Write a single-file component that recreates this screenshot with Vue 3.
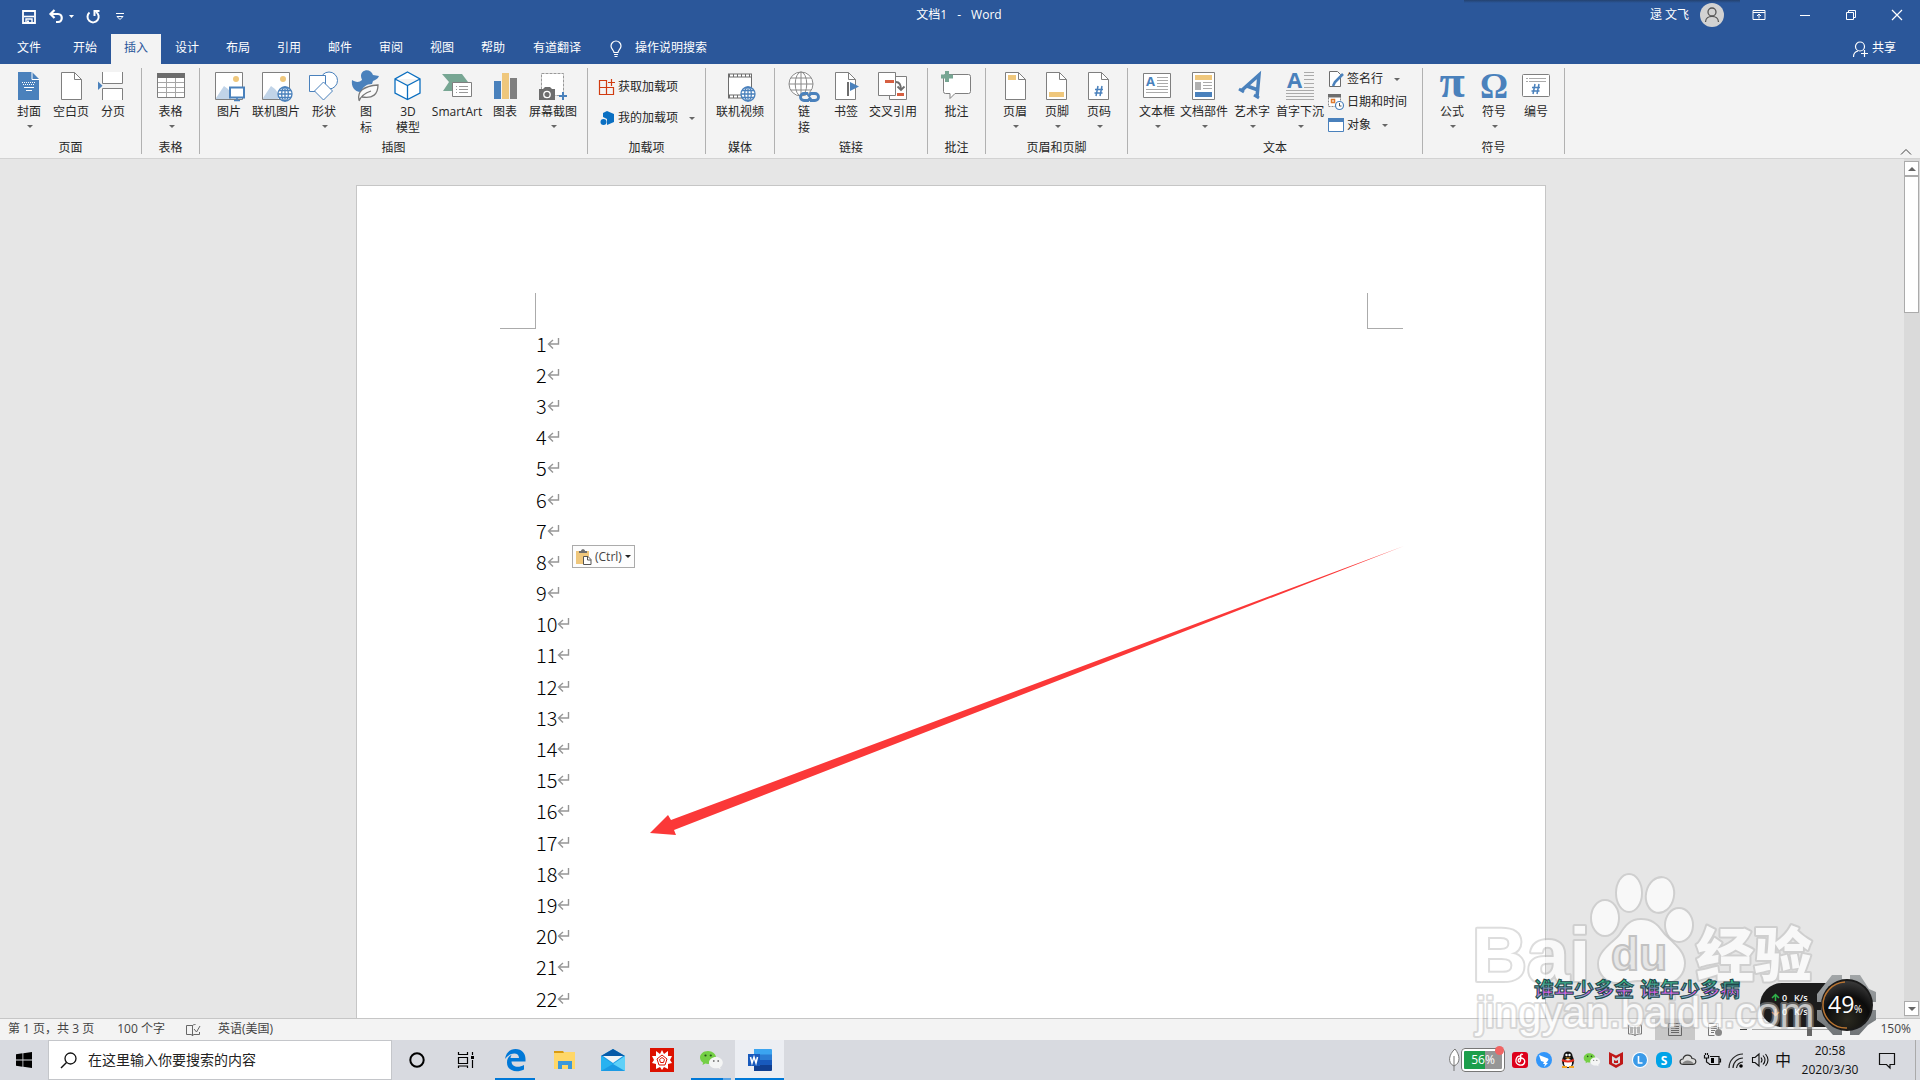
<template>
  <div class="word-app">
    <!-- 标题栏 -->
    <header class="title-bar">
      <div class="quick-access">
        <button v-for="q in quickActions" :key="q.icon" type="button" :class="['quick-btn', q.icon]" :aria-label="q.label">
          <svg :width="q.w" height="16" :viewBox="`0 0 ${q.w} 16`" v-html="icons[q.icon]"></svg>
        </button>
      </div>
      <h1 class="doc-title"><span>文档1</span><span>-</span><span>Word</span></h1>
      <div class="window-area">
        <span class="user-name">逯 文飞</span>
        <span class="avatar">
          <svg width="24" height="24" viewBox="0 0 24 24" v-html="icons.avatar"></svg>
        </span>
        <button v-for="w in windowActions" :key="w.icon" type="button" class="win-btn" :aria-label="w.label">
          <svg width="16" height="16" viewBox="0 0 16 16" v-html="icons[w.icon]"></svg>
        </button>
      </div>
      <div class="top-shadow"></div>
    </header>

    <!-- 选项卡 -->
    <nav class="tab-bar">
      <button
        v-for="t in tabs"
        :key="t"
        type="button"
        class="tab"
        :class="{ active: activeTab === t, file: t === '文件' }"
        @click="activeTab = t"
      >{{ t }}</button>
      <button type="button" class="tell-me">
        <svg width="12" height="18" viewBox="0 0 12 18" v-html="icons.bulb"></svg>
        <span>操作说明搜索</span>
      </button>
      <button type="button" class="share-btn">
        <svg width="16" height="16" viewBox="0 0 16 16" v-html="icons.share"></svg>
        <span>共享</span>
      </button>
    </nav>

    <!-- 功能区 -->
    <section class="ribbon">
      <div v-for="g in groups" :key="g.name" class="group" :class="g.size">
        <div class="group-body">
          <button v-for="b in g.items" :key="b.label" type="button" class="big-btn" :class="b.size">
            <svg width="32" height="32" viewBox="0 0 32 32" v-html="icons[b.icon]"></svg>
            <span class="big-label">{{ b.label }}</span>
            <i v-if="b.drop" class="caret"></i>
          </button>
          <div v-if="g.rows" class="small-list" :class="{ roomy: g.rows.length === 2 }">
            <button v-for="r in g.rows" :key="r.label" type="button" class="small-btn">
              <svg width="16" height="16" viewBox="0 0 16 16" v-html="icons[r.icon]"></svg>
              <span>{{ r.label }}</span>
              <i v-if="r.drop" class="caret"></i>
            </button>
          </div>
        </div>
        <div class="group-name">{{ g.name }}</div>
      </div>
      <button type="button" class="collapse-btn" aria-label="折叠功能区">
        <svg width="12" height="8" viewBox="0 0 12 8"><path d="M1 6.500l5-5 5 5" fill="none" stroke="#444" /></svg>
      </button>
    </section>

    <!-- 文档区 -->
    <main class="workspace">
      <div class="canvas">
        <article class="page">
          <div class="margin-marks">
            <span class="mark left"></span>
            <span class="mark right"></span>
          </div>
          <ol class="lines">
            <li v-for="n in 22" :key="n">
              <span>{{ n }}</span>
              <svg width="13" height="12" viewBox="0 0 13 12"><path d="M11.500 0v6H2M6 2L1.500 6 6 10.500" fill="none" stroke="#969696" stroke-width="1.400" /></svg>
            </li>
          </ol>
          <button type="button" class="paste-btn">
            <svg width="16" height="16" viewBox="0 0 16 16" v-html="icons.paste"></svg>
            <span>(Ctrl)</span>
            <i class="caret dark"></i>
          </button>
          <svg class="red-arrow" width="760" height="292" viewBox="648 545 760 292">
            <path d="M650 833L668 815 671 820 1404 546 674 830 676 835z" fill="#fb3838" />
          </svg>
        </article>
      </div>
      <div class="scrollbar">
        <button type="button" class="scroll-btn" aria-label="向上滚动"><i class="caret up"></i></button>
        <div class="thumb"></div>
        <button type="button" class="scroll-btn end" aria-label="向下滚动"><i class="caret down"></i></button>
      </div>
    </main>

    <!-- 状态栏 -->
    <footer class="status-bar">
      <span class="st-page">第 1 页，共 3 页</span>
      <span class="st-count">100 个字</span>
      <svg class="st-book" width="16" height="14" viewBox="0 0 16 14" v-html="icons.proof"></svg>
      <span class="st-lang">英语(美国)</span>
      <div class="views">
        <button v-for="v in viewModes" :key="v.icon" type="button" class="view-btn" :class="{ active: v.icon === 'viewPrint' }" :aria-label="v.label">
          <svg width="16" height="14" viewBox="0 0 16 14" v-html="icons[v.icon]"></svg>
        </button>
      </div>
      <span class="minus"></span>
      <input v-model="zoom" class="zoom-range" type="range" min="0" max="340" aria-label="缩放" />
      <span class="zoom-text">150%</span>
    </footer>

    <!-- 任务栏 -->
    <div class="taskbar">
      <button type="button" class="start-btn" aria-label="开始">
        <svg width="16" height="16" viewBox="0 0 16 16"><path d="M0 2.300l6.500-1v6.300H0zM7.300 1.200L16 0v7.600H7.300zM0 8.400h6.500v6.300L0 13.800zM7.300 8.400H16V16l-8.700-1.200z" /></svg>
      </button>
      <label class="search-box">
        <svg width="17" height="17" viewBox="0 0 17 17"><circle cx="10.500" cy="6.500" r="5.500" fill="none" stroke="#111" stroke-width="1.300" /><path d="M6.500 10.500L1 16" stroke="#111" stroke-width="1.400" /></svg>
        <input v-model="keyword" type="text" placeholder="在这里输入你要搜索的内容" />
      </label>
      <button v-for="a in apps" :key="a.icon" type="button" class="app-btn" :class="a.state" :aria-label="a.label">
        <svg width="24" height="24" viewBox="0 0 24 24" v-html="icons[a.icon]"></svg>
      </button>
      <div class="tray">
        <svg class="leaf" width="12" height="24" viewBox="0 0 12 24" v-html="icons.leaf"></svg>
        <div class="battery"><span>56%</span></div>
        <button v-for="t in trayIcons" :key="t" type="button" class="tray-btn" :aria-label="t">
          <svg width="18" height="18" viewBox="0 0 18 18" v-html="icons[t]"></svg>
        </button>
        <span class="ime">中</span>
        <div class="clock"><span>20:58</span><span>2020/3/30</span></div>
        <button type="button" class="notice-btn" aria-label="通知">
          <svg width="18" height="18" viewBox="0 0 18 18"><path d="M1.500 2.500h15v11h-4.500v3.500l-3.500-3.500h-7z" fill="none" stroke="#111" stroke-width="1.200" /></svg>
        </button>
      </div>
    </div>

    <!-- 悬浮层：网速球、歌词、水印 -->
    <svg class="floating" width="460" height="220" viewBox="1460 860 460 220">
      <defs>
        <linearGradient id="lyric" x1="0" y1="0" x2="0" y2="1">
          <stop offset="0.2" stop-color="#2fc884" />
          <stop offset="0.45" stop-color="#5b9ba0" />
          <stop offset="0.62" stop-color="#ee5af5" />
          <stop offset="0.85" stop-color="#58c7b0" />
        </linearGradient>
        <linearGradient id="metal" x1="0" y1="0" x2="0" y2="1">
          <stop offset="0" stop-color="#a2a6a8" />
          <stop offset="1" stop-color="#707477" />
        </linearGradient>
        <radialGradient id="ball" cx="0.5" cy="0.8" r="0.8">
          <stop offset="0" stop-color="#2b2a20" />
          <stop offset="0.6" stop-color="#0b0b0b" />
          <stop offset="1" stop-color="#3a3a3a" />
        </radialGradient>
      </defs>
      <rect x="1760" y="983" width="96" height="44" rx="22" fill="#1c1c1c" />
      <g class="speed-text">
        <path d="M1775.500 1001v-6M1772 998l3.500-3.500 3.500 3.500" fill="none" stroke="#2fb34a" stroke-width="1.500" />
        <text x="1782" y="1001">0</text>
        <text x="1794" y="1001">K/s</text>
        <path d="M1775.500 1009v6M1772 1012l3.500 3.500 3.500-3.500" fill="none" stroke="#d9762b" stroke-width="1.500" />
        <text x="1782" y="1015">0</text>
        <text x="1794" y="1015">K/s</text>
      </g>
      <g class="mark-shape">
        <text x="1472" y="981" class="mark-big">Bai</text>
        <ellipse cx="1605" cy="918" rx="13" ry="17" />
        <ellipse cx="1629" cy="893" rx="12" ry="18" />
        <ellipse cx="1660" cy="895" rx="13" ry="17" transform="rotate(12 1660 895)" />
        <ellipse cx="1679" cy="925" rx="13" ry="16" />
        <path d="M1641 920c-10 0-15 6-20 14s-22 16-22 30c0 10 8 18 18 18 8 0 14-2 24-2s16 2 25 2c11 0 18-9 18-19 0-14-16-22-23-32-5-7-10-11-20-11z" />
        <text x="1696" y="976" class="mark-cn">经验</text>
        <text x="1476" y="1027" class="mark-url">jingyan.baidu.com</text>
      </g>
      <text x="1611" y="970" class="mark-du">du</text>
      <text x="1534" y="997" class="lyric" fill="url(#lyric)">谁年少多金</text>
      <text x="1640" y="997" class="lyric" fill="url(#lyric)">谁年少多病</text>
      <path d="M1832 975h10v4h8v-4h10l9 14 7 3v10h-5v8h5v10l-8 5-9 10h-9v-5h-8v5h-9l-9-10-7-5v-10h4v-8h-4v-8z" fill="url(#metal)" />
      <circle cx="1847" cy="1005" r="26" fill="#1a1a1a" />
      <circle cx="1847" cy="1005" r="24" fill="url(#ball)" />
      <path d="M1845 982a23 23 0 0 0 2 46" fill="none" stroke="#b87432" stroke-width="1.500" />
      <text x="1828" y="1013" class="ball-num">49</text>
      <text x="1854" y="1013" class="ball-pct">%</text>
    </svg>
  </div>
</template>

<script setup>
import { ref } from 'vue';

const activeTab = ref('插入');
const keyword = ref('');
const zoom = ref(190);

const tabs = ['文件', '开始', '插入', '设计', '布局', '引用', '邮件', '审阅', '视图', '帮助', '有道翻译'];

const quickActions = [
  { icon: 'save', label: '保存', w: 16 },
  { icon: 'undo', label: '撤消', w: 26 },
  { icon: 'redo', label: '重复', w: 16 },
  { icon: 'more', label: '自定义快速访问工具栏', w: 16 }
];

const windowActions = [
  { icon: 'ribbonMode', label: '功能区显示选项' },
  { icon: 'minimize', label: '最小化' },
  { icon: 'restore', label: '还原' },
  { icon: 'close', label: '关闭' }
];

const groups = [
  {
    name: '页面', size: 'g142',
    items: [
      { icon: 'cover', label: '封面', drop: true },
      { icon: 'blank', label: '空白页' },
      { icon: 'pageBreak', label: '分页' }
    ]
  },
  { name: '表格', size: 'g58', items: [{ icon: 'table', label: '表格', drop: true }] },
  {
    name: '插图', size: 'g388',
    items: [
      { icon: 'picture', label: '图片' },
      { icon: 'onlinePic', label: '联机图片', size: 'wide' },
      { icon: 'shapes', label: '形状', drop: true, size: 'mid' },
      { icon: 'duck', label: '图 标', size: 'thin' },
      { icon: 'cube', label: '3D 模型', size: 'thin3d' },
      { icon: 'smartArt', label: 'SmartArt', size: 'wider' },
      { icon: 'chart', label: '图表' },
      { icon: 'screenshot', label: '屏幕截图', drop: true, size: 'wider' }
    ]
  },
  {
    name: '加载项', size: 'g118',
    rows: [
      { icon: 'getAddin', label: '获取加载项' },
      { icon: 'myAddin', label: '我的加载项', drop: true }
    ]
  },
  { name: '媒体', size: 'g69', items: [{ icon: 'video', label: '联机视频', size: 'wide' }] },
  {
    name: '链接', size: 'g153',
    items: [
      { icon: 'link', label: '链 接', size: 'narrow' },
      { icon: 'bookmark', label: '书签' },
      { icon: 'crossRef', label: '交叉引用', size: 'wide' }
    ]
  },
  { name: '批注', size: 'g58', items: [{ icon: 'comment', label: '批注' }] },
  {
    name: '页眉和页脚', size: 'g142',
    items: [
      { icon: 'pageHeader', label: '页眉', drop: true },
      { icon: 'pageFooter', label: '页脚', drop: true },
      { icon: 'pageNumber', label: '页码', drop: true }
    ]
  },
  {
    name: '文本', size: 'g295',
    items: [
      { icon: 'textBox', label: '文本框', drop: true },
      { icon: 'parts', label: '文档部件', drop: true, size: 'wide' },
      { icon: 'wordArt', label: '艺术字', drop: true, size: 'mid' },
      { icon: 'dropCap', label: '首字下沉', drop: true, size: 'wide' }
    ],
    rows: [
      { icon: 'sign', label: '签名行', drop: true },
      { icon: 'date', label: '日期和时间' },
      { icon: 'object', label: '对象', drop: true }
    ]
  },
  {
    name: '符号', size: 'g142',
    items: [
      { icon: 'pi', label: '公式', drop: true },
      { icon: 'omega', label: '符号', drop: true },
      { icon: 'number', label: '编号' }
    ]
  }
];

const viewModes = [
  { icon: 'viewRead', label: '阅读视图' },
  { icon: 'viewPrint', label: '页面视图' },
  { icon: 'viewWeb', label: 'Web 版式视图' }
];

const apps = [
  { icon: 'cortana', label: 'Cortana' },
  { icon: 'taskView', label: '任务视图' },
  { icon: 'edge', label: 'Edge', state: 'running' },
  { icon: 'explorer', label: '文件资源管理器' },
  { icon: 'mail', label: '邮件' },
  { icon: 'wolfram', label: 'Mathematica' },
  { icon: 'wechat', label: '微信', state: 'running multi' },
  { icon: 'word', label: 'Word', state: 'current' }
];

const trayIcons = ['music', 'bird', 'qq', 'wechatSmall', 'mcafee', 'clockL', 'skype', 'cloud', 'plug', 'wifi', 'volume'];

// 地球图标，多个按钮共用
const globe = (x, y, r, color, width = 1.3) => `
  <g fill="none" stroke="${color}" stroke-width="${width}">
    <circle cx="${x}" cy="${y}" r="${r}" fill="#fff"/>
    <ellipse cx="${x}" cy="${y}" rx="${r * 0.48}" ry="${r}"/>
    <path d="M${x} ${y - r}v${r * 2}M${x - r} ${y}h${r * 2}M${x - r * 0.86} ${y - r * 0.5}h${r * 1.72}M${x - r * 0.86} ${y + r * 0.5}h${r * 1.72}"/>
  </g>`;

// 折角纸张
const sheet = (x) => `<path d="M${x}.500 1.500h13l7 7v20h-20z" fill="#fff" stroke="#7f7f7f"/><path d="M${x + 13}.500 1.500v7h7" fill="none" stroke="#7f7f7f"/>`;

const photo = `<path d="M2.500 1.500h27v27h-27z" fill="#fff" stroke="#7f7f7f"/><path d="M3 27l8-12 4 3 3 4v6H3z" fill="#c1d4e8"/><circle cx="23" cy="8" r="3" fill="#efc77c"/>`;

const wechatShape = `
  <path d="M9 3c-4.600 0-8 2.900-8 6.600 0 2.200 1.200 4 3.100 5.200L3.500 17l2.800-1.400c.9.300 1.800.4 2.700.4 4.500 0 8-2.800 8-6.400S13.500 3 9 3z" fill="#74cf45"/>
  <circle cx="6.500" cy="7.500" r="1.100" fill="#28511b"/><circle cx="11.800" cy="7.500" r="1.100" fill="#28511b"/>
  <path d="M17 9c-3.900 0-7 2.500-7 5.700s3.100 5.600 7 5.600c.8 0 1.600-.1 2.300-.3l2.300 1.200-.5-2c1.700-1 2.700-2.600 2.700-4.500C23.800 11.500 20.800 9 17 9z" fill="#f4f5f5"/>
  <circle cx="14.800" cy="13" r=".9" fill="#777"/><circle cx="19.200" cy="13" r=".9" fill="#777"/>`;

const icons = {
  save: '<path d="M2 2h12v12H2z" fill="none" stroke="#fff" stroke-width="1.800"/><path d="M3 7.500h10" stroke="#fff" stroke-width="1.600"/><path d="M5 14v-4h6v4" fill="none" stroke="#fff" stroke-width="1.400"/><path d="M6 11.500h2V14H6z" fill="#fff"/>',
  undo: '<path d="M3 5h7c5 0 5 8 0 8H8" fill="none" stroke="#fff" stroke-width="2.200"/><path d="M6.500 1L2.500 5l4 4" fill="none" stroke="#fff" stroke-width="2.200"/><path d="M21 6h5l-2.500 3z" fill="#fff"/>',
  redo: '<path d="M4.500 3.500A5.600 5.600 0 1 0 11 3" fill="none" stroke="#fff" stroke-width="2"/><path d="M9.500 7V2h5" fill="none" stroke="#fff" stroke-width="2"/>',
  more: '<path d="M4 4.500h8" stroke="#fff"/><path d="M5 7.500l3 3 3-3z" fill="none" stroke="#fff"/>',
  avatar: '<circle cx="12" cy="12" r="12" fill="#d2d2d2"/><circle cx="12" cy="9" r="4" fill="none" stroke="#555" stroke-width="1.300"/><path d="M5.500 19c0-7.500 13-7.500 13 0" fill="none" stroke="#555" stroke-width="1.300"/>',
  ribbonMode: '<path d="M2 3.500h12v9H2zM2 5.500h12M8 11.500V7M6 9l2-2 2 2" fill="none" stroke="#fff"/>',
  minimize: '<path d="M3 8.500h10" stroke="#fff"/>',
  restore: '<path d="M3.500 5.500h7v7h-7zM5.500 5.500v-2h7v7h-2" fill="none" stroke="#fff"/>',
  close: '<path d="M3 3l10 10M13 3L3 13" stroke="#fff" stroke-width="1.200"/>',
  bulb: '<path d="M4 12.500c0-2-3-3.500-3-6.500a5 5 0 0 1 10 0c0 3-3 4.500-3 6.500zM4 14.500h4M4.500 16.500h3" fill="none" stroke="#fff" stroke-width="1.200"/>',
  share: '<circle cx="8" cy="5.500" r="4.500" fill="none" stroke="#fff" stroke-width="1.200"/><path d="M1.500 16c0-4 2-5.500 4.500-6M12.500 9v7M9 12.500h7" fill="none" stroke="#fff" stroke-width="1.200"/>',

  cover: '<path d="M5 1h14l7 7v21H5z" fill="#4a81bc"/><path d="M19 1v7.500h7" fill="none" stroke="#fff"/><path d="M9 11.500h13M10 13.500h12" stroke="#fff" stroke-dasharray="1 1"/><path d="M11 16.500h10M13 19.500h6" stroke="#fff"/>',
  blank: sheet(6),
  pageBreak: '<path d="M5 1h21v12H5zM5 17h21v12H5z" fill="#fff"/><path d="M5.500 1v11.500h20V1M5.500 29V17.500h20V29" fill="none" stroke="#7f7f7f"/><path d="M1 10.500l4.500 4.300L1 19z" fill="#4a81bc"/>',
  table: '<path d="M2.500 2.500h27v24h-27z" fill="#fff" stroke="#7f7f7f"/><path d="M2 2h28v5H2z" fill="#6d6d6d"/><path d="M3 11.500h26M3 16.500h26M3 21.500h26M11.500 7v19M20.500 7v19" stroke="#a6a6a6"/>',
  picture: photo + '<path d="M17 16.500h14v10H17z" fill="#fff" stroke="#4a81bc" stroke-width="2"/><path d="M24 27v2M21 29.500h6" stroke="#4a81bc" stroke-width="1.600"/>',
  onlinePic: photo + globe(25, 23, 7, '#4a81bc'),
  shapes: '<circle cx="21" cy="9.500" r="8.500" fill="#fff" stroke="#4a81bc"/><path d="M1.500 4.500h16v16h-16z" fill="#fff" stroke="#4a81bc"/><path d="M15.500 11l9 9-9 9-9-9z" fill="#fff" stroke="#4a81bc"/>',
  duck: '<path d="M2 9c3 2 7 3 10 0 0-1-1-2-1-4 0-7 10-8 12-1l6 1c-1 3-4 4-6 5l-1 3c-6 0-9 3-11 8C4 21 1 15 2 9z" fill="#4a81bc"/><path d="M9 29c-2-8 4-14 19-15 0 9-5 14-16 12M9 30c2-5 6-8 12-10" fill="#fafafa" stroke="#777" stroke-width="1.300"/>',
  cube: '<path d="M15.500 1L28 8v14l-12.500 6.500L3 22V8zM3 8l12.500 6.500L28 8M15.500 14.500v14" fill="#fff" stroke="#0b6fc0" stroke-width="1.300"/>',
  smartArt: '<path d="M1 3h20l6 8-6 9H2l6-9z" fill="#77a693"/><path d="M11.500 11.500h19v14h-19z" fill="#fff" stroke="#7f7f7f"/><path d="M15 15.500h1M18 15.500h9M15 18.500h1M18 18.500h9M15 21.500h1M18 21.500h9" stroke="#999"/>',
  chart: '<path d="M5 10h7v18H5z" fill="#4a81bc"/><path d="M13 2h7v26h-7z" fill="#efc77c"/><path d="M21 7h7v21h-7z" fill="#7f7f7f"/>',
  screenshot: '<path d="M4.500 2.500h22v22h-22z" fill="#fff" stroke="#999" stroke-dasharray="3 1"/><path d="M2 18h4l2-2h5l2 2h3v11H2z" fill="#6d6d6d"/><circle cx="10" cy="23.500" r="3.200" fill="#6d6d6d" stroke="#fff" stroke-width="1.300"/><path d="M26 21v8M22 25h8" stroke="#4a81bc" stroke-width="2"/>',
  video: '<path d="M4.500 3.500h23v23h-23z" fill="#fff" stroke="#6d6d6d"/><path d="M4 4.500h24M4 25.500h24" stroke="#6d6d6d" stroke-width="4"/><path d="M6 4.500h21M6 25.500h21" stroke="#fff" stroke-width="2" stroke-dasharray="3 1"/>' + globe(24, 23, 7, '#4a81bc'),
  link: globe(13, 13, 12, '#8a8a8a', 1) + '<g fill="none" stroke="#4a81bc" stroke-width="2.800"><path d="M20 22.500h-4a3.500 3.500 0 0 0 0 7h4l3-3M22 29.500h5a3.500 3.500 0 0 0 0-7h-4l-3 3"/></g>',
  bookmark: sheet(5) + '<path d="M18 11v14" stroke="#6d6d6d" stroke-width="2"/><path d="M20 11l9 4.500-9 4.500z" fill="#4a81bc"/>',
  crossRef: '<path d="M12.500 5.500h17v23h-17z" fill="#fff" stroke="#7f7f7f"/><path d="M1.500 1.500h17v23h-17z" fill="#fff" stroke="#7f7f7f"/><path d="M8 9h9v3H8zM20 22h7v3h-7z" fill="#d65f41"/><path d="M19 11c4 0 5 3 5 8M20.500 15.500l3.500 3.500 3.500-3.500" fill="none" stroke="#6d6d6d" stroke-width="1.800"/>',
  comment: '<path d="M4.500 3.500h23q2 0 2 2v15q0 2-2 2H14l-5 5v-5H4.500q-2 0-2-2v-15q0-2 2-2z" fill="#fff" stroke="#7f7f7f"/><path d="M6 0v11M0 5.500h12" stroke="#77a693" stroke-width="4"/>',
  pageHeader: sheet(6) + '<path d="M9 4h8v5H9z" fill="#efc77c"/>',
  pageFooter: sheet(5) + '<path d="M8 21h15v5H8z" fill="#efc77c"/>',
  pageNumber: sheet(5) + '<path d="M15 15l-2 10M19 15l-2 10M12 18.500h8M11.500 22h8" stroke="#4a81bc" stroke-width="1.500"/>',
  textBox: '<path d="M2.500 2.500h27v24h-27z" fill="#fff" stroke="#7f7f7f"/><text x="5" y="15" font-size="13" font-weight="700" fill="#4a81bc">A</text><path d="M16 6.500h11M16 9.500h11M16 12.500h11M16 15.500h11M5 18.500h22M5 21.500h22" stroke="#aaa"/>',
  parts: '<path d="M4.500 1.500h22v27h-22z" fill="#fff" stroke="#7f7f7f"/><path d="M7 4h17v5H7z" fill="#efc77c"/><path d="M7 11h6v8H7z" fill="#b0b0b0"/><path d="M7 21h17v5H7z" fill="#4a81bc"/><path d="M15 11.500h9M15 14.500h9M15 17.500h9" stroke="#aaa"/>',
  wordArt: '<path d="M5 20L23 4l-2 22M11 15l11 4" fill="none" stroke="#4a81bc" stroke-width="3.500"/><path d="M3 18l5 3M18 24l5 3" stroke="#4a81bc" stroke-width="3"/>',
  dropCap: '<text x="3" y="17" font-size="22" font-weight="700" fill="#4a81bc">A</text><path d="M20 1.500h10M20 4.500h10M20 8.500h10M20 12.500h10M20 16.500h10M2 19.500h28M2 22.500h28M2 25.500h28M2 28.500h28" stroke="#aaa"/>',
  pi: '<text x="16" y="26" text-anchor="middle" font-family="Liberation Serif, serif" font-size="46" font-weight="700" fill="#4a81bc">π</text>',
  omega: '<text x="16" y="27" text-anchor="middle" font-family="Liberation Serif, serif" font-size="35" font-weight="700" fill="#4a81bc">Ω</text>',
  number: '<rect x="2.500" y="3.500" width="27" height="22" rx="1" fill="#fff" stroke="#7f7f7f"/><path d="M6 7.500h2M9 7.500h17M6 10.500h2M9 10.500h17" stroke="#aaa"/><path d="M15 13l-2 10M19 13l-2 10M12 16.500h8M11.500 20h8" stroke="#4a81bc" stroke-width="1.500"/>',

  getAddin: '<path d="M.5 1.500h7v14h-7zM.5 8.500h14v7H.5zM12.500 0v7M9 3.500h7" fill="none" stroke="#d13c10" stroke-width="1.200"/>',
  myAddin: '<path d="M8 1l7 3v8l-7 3V9L4 7V3z" fill="#0a6fc2"/><circle cx="4.500" cy="12" r="3" fill="#0a6fc2"/>',
  sign: '<path d="M1.500 .5h8l3 3v12h-11z" fill="#fff" stroke="#6d6d6d"/><path d="M15 3L7 11l-2 4" fill="none" stroke="#4a81bc" stroke-width="2.600"/>',
  date: '<path d="M.5 1.500h12v11H.5z" fill="#fff" stroke="#8a8a8a" stroke-dasharray="2 1"/><path d="M0 0h13v3.500H0z" fill="#6d6d6d"/><path d="M3.500 5.500h3v3h-3z" fill="none" stroke="#e07a2e" stroke-width="1.500"/><circle cx="11.500" cy="11.500" r="4" fill="#fff" stroke="#4a81bc" stroke-width="1.200"/><path d="M11.500 9v3h2" fill="none" stroke="#555"/>',
  object: '<path d="M.5 1.500h15v13H.5z" fill="#fff" stroke="#4a81bc"/><path d="M0 1h16v4H0z" fill="#4a81bc"/>',
  paste: '<path d="M0 2h13v13H0z" fill="#efc77c"/><path d="M3 4V2h2c0-2.500 4-2.500 4 0h2v2z" fill="#6d6d6d"/><path d="M7.500 7.500h4.500l3 3v5H7.500z" fill="#fff" stroke="#555"/><path d="M11.500 7.500v3.500h3.500" fill="none" stroke="#555"/>',

  proof: '<path d="M7.500 2.500h-6v9h5l1 1.500zM7.500 2.500V13l1-1.500h6V9M7.500 2.500c1-1 2-1 3-1M9 6l2.500 3L15 3" fill="none" stroke="#666"/>',
  viewRead: '<path d="M8 3c-2-1-4-1-6.500-1v9c2.500 0 4.500 0 6.500 1.500 2-1.500 4-1.500 6.500-1.500V2C12 2 10 2 8 3zv9.500M3 5h3M3 7h3M3 9h3M10 5h3M10 7h3M10 9h3" fill="none" stroke="#777"/>',
  viewPrint: '<path d="M1.500 .5h13v12h-13zM4 3.500h8M4 5.500h8M4 7.500h8M4 9.500h8" fill="none" stroke="#666"/>',
  viewWeb: '<path d="M11.500 6V.5h-10v12h6M4 3.500h6M4 5.500h6M4 7.500h4M4 9.500h3" fill="none" stroke="#777"/><circle cx="11.500" cy="9.500" r="3.500" fill="#888"/>',

  cortana: '<circle cx="12" cy="12" r="6.700" fill="none" stroke="#000" stroke-width="2"/>',
  taskView: '<path d="M4.500 4v2.500h9V4M4.500 9.500h9v6h-9zM4.500 20v-2h9v2M18.500 4v3M18.500 12v8" fill="none" stroke="#000" stroke-width="1.200"/><path d="M17 8h3v3h-3z"/>',
  edge: '<path d="M2 11C3 4 7.500 1 12.500 1 19 1 22.500 5.500 22.500 11v2.500H8.500c.2 6 7.500 6.500 12.500 3.500v4.500c-7 3.500-17 2-17-7 0-4 2-6.500 5-8-1 1-1.500 2.500-1.500 3.500h8.500c0-6-9-6-14 1z" fill="#0078d7"/>',
  explorer: '<path d="M2 3h9l1.500 2H2z" fill="#d99b12"/><path d="M2 5h9l2-1h10v17H2z" fill="#ffd768"/><path d="M6 21v-8h14v8h-4v-4h-6v4z" fill="#3a98dc"/>',
  mail: '<path d="M0 8l12-7 12 7v15H0z" fill="#1b9ae4"/><path d="M0 8l12-7 12 7z" fill="#075aa8"/><path d="M24 8L12 16l12 7z" fill="#5fd0f8"/><path d="M0 8l12 8L0 23z" fill="#28b2f0"/><path d="M2 8h20l-10 7z" fill="#f1f4f7"/>',
  wolfram: '<path d="M0 0h24v24H0z" fill="#dd1100"/><path d="M12 2l2 4 4-3v5l4 0-2 4 2 3-4 1v5l-4-2-2 3-2-3-4 2v-5l-4-1 2-3-2-4h4V3l4 3z" fill="#fff"/><path d="M12 7l5 4-2 6H9l-2-6zM12 9.500l2.500 2-1 3h-3l-1-3z" fill="none" stroke="#dd1100"/>',
  wechat: wechatShape,
  word: '<path d="M6 1h17q1 0 1 1v5H6z" fill="#3ba4f0"/><path d="M6 6.500h18v5.500H6z" fill="#2b7cd3"/><path d="M6 12h18v5H6z" fill="#185abd"/><path d="M6 17h18v5q0 1-1 1H6z" fill="#103f91"/><path d="M0 6h12v12H0z" fill="#185abd"/><path d="M2.500 9l1.500 6 2-6 2 6 1.500-6" fill="none" stroke="#fff" stroke-width="1.500"/>',

  leaf: '<path d="M6 23v-5C-1 15 1 6 7 1c5 6 6 14-1 17V8" fill="#fff" stroke="#777"/>',
  music: '<rect x="1" y="1" width="16" height="16" rx="3" fill="#dd001b"/><path d="M10.500 5c-6-1-8 8-2 9 6 1 7-6 2-7-4 0-4 4-2 4 2-1 1-4 1-6 0-2 1-2 2.500-1.500" fill="none" stroke="#fff" stroke-width="1.300"/>',
  bird: '<circle cx="9" cy="9" r="8" fill="#3296fa"/><path d="M4 4l9 3.500q1 .5 0 2L11 12h2l-4 4 1-3H8l1-2-3-1z" fill="#fff"/>',
  qq: '<ellipse cx="9" cy="10" rx="6" ry="7" fill="#111"/><circle cx="9" cy="5" r="4.500" fill="#111"/><ellipse cx="9" cy="12" rx="4" ry="4" fill="#fff"/><circle cx="7.500" cy="4" r="1.200" fill="#fff"/><circle cx="10.500" cy="4" r="1.200" fill="#fff"/><path d="M6 6.500h6L9 8z" fill="#f5a623"/><path d="M3 9q6 3 12 0" fill="none" stroke="#e22c1f" stroke-width="2"/><path d="M3 16h5M10 16h5" stroke="#f5a623" stroke-width="2"/>',
  wechatSmall: `<g transform="scale(.72)">${wechatShape}</g>`,
  mcafee: '<path d="M2 1l7 3.500L16 1v12l-7 4-7-4z" fill="#c01818"/><path d="M5 5l4 2.500L13 5v7l-4 2-4-2z" fill="#d8d8dc"/><path d="M7 9l2 1 2-1v3H7z" fill="#c01818"/>',
  clockL: '<circle cx="9" cy="9" r="8" fill="#fff"/><circle cx="9" cy="9" r="7" fill="#3b9ae8"/><path d="M7.500 5v7h4" fill="none" stroke="#fff" stroke-width="1.600"/>',
  skype: '<rect x="1" y="1" width="16" height="16" rx="6" fill="#00a3e8"/><text x="9" y="13.500" text-anchor="middle" font-size="12" font-weight="700" fill="#fff">S</text>',
  cloud: '<path d="M4.500 13.500C0 13.500 0 8 4 8c1-5 8-5 9-.500 5 0 5 6 .500 6z" fill="#ddd" stroke="#333" stroke-width="1.200"/><path d="M3 13c2-4 8-5 12 0z" fill="#888"/>',
  plug: '<path d="M7 5.500h9v8H6M16 8h1.500v3H16M1.500 4v3h4V4M2.500 2v2M4.500 2v2M3.500 7v4l3 2" fill="none" stroke="#111" stroke-width="1.200"/><path d="M8 7h3v5H8z"/>',
  wifi: '<path d="M2 17A14 14 0 0 1 16 3M6 17A10 10 0 0 1 16 7M9.500 17a6.500 6.500 0 0 1 6.500-6" fill="none" stroke="#222" stroke-width="1.200"/><circle cx="14" cy="15" r="1.800"/>',
  volume: '<path d="M1.500 6.500H4L8 3v12l-4-3.500H1.500z" fill="none" stroke="#111" stroke-width="1.100"/><path d="M10 6.500q2 2.500 0 5M12 4.500q4 4.500 0 9M14.500 3q5 6 0 12" fill="none" stroke="#111" stroke-width="1.100"/>'
};
</script>

<style>
body { margin: 0; overflow: hidden; }
</style>

<style scoped>
.word-app {
  position: relative;
  display: flex;
  flex-direction: column;
  height: 100vh;
  overflow: hidden;
  font-family: "Open Sans", "Noto Sans CJK SC", sans-serif;
  font-size: 12px;
  line-height: 16px;
  color: #262626;
}
button {
  padding: 0;
  border: none;
  background: transparent;
  font: inherit;
  color: inherit;
  cursor: pointer;
}
svg { display: block; flex-shrink: 0; overflow: visible; }

.caret {
  width: 0;
  height: 0;
  border: 3px solid transparent;
  border-top-color: #666;
  border-bottom: none;
}
.caret.up { border-top: none; border-bottom: 4px solid #666; border-left-width: 4px; border-right-width: 4px; }
.caret.down { border-width: 4px 4px 0; }
.caret.dark { border-top-color: #222; }

/* 标题栏 */
.title-bar {
  position: relative;
  display: grid;
  grid-template-columns: 1fr auto 1fr;
  align-items: center;
  height: 34px;
  background: #2b579a;
  color: #fff;
}
.quick-access { display: flex; align-items: center; gap: 11px; padding-left: 21px; }
.doc-title { display: flex; gap: 10px; margin: 0; padding: 0 2px 4px 0; font-size: 12px; font-weight: 400; }
.window-area { display: flex; align-items: center; justify-content: flex-end; padding-bottom: 4px; }
.avatar { margin: 0 12px 0 11px; }
.win-btn { display: flex; justify-content: center; width: 46px; }
.top-shadow {
  position: absolute; top: 0; right: 180px; width: 276px; height: 3px;
  background: linear-gradient(#24426f, #2b579a);
}

/* 选项卡 */
.tab-bar { display: flex; align-items: stretch; height: 30px; background: #2b579a; color: #fff; }
.tab { padding: 0 12px 2px; margin: 0 1px 0 0; width: 50px; white-space: nowrap; }
.tab.file { width: 58px; margin-right: 2px; }
.tab:nth-child(11) { width: 76px; }
.tab.active { background: #f3f3f3; color: #2b579a; }
.tell-me { display: flex; align-items: center; gap: 13px; margin-left: 14px; }
.share-btn { display: flex; align-items: center; gap: 4px; margin-left: auto; padding-right: 24px; }
.tell-me span, .share-btn span { padding-bottom: 2px; }

/* 功能区 */
.ribbon {
  display: flex;
  height: 95px;
  padding-top: 4px;
  box-sizing: border-box;
  background: #f3f3f3;
  border-bottom: 1px solid #d2d2d2;
}
.group {
  display: flex;
  flex-direction: column;
  height: 86px;
  box-sizing: border-box;
  border-right: 1px solid #b1b1b1;
}
.g142 { width: 142px; }
.g58 { width: 58px; }
.g388 { width: 388px; }
.g118 { width: 118px; }
.g69 { width: 69px; }
.g153 { width: 153px; }
.g295 { width: 295px; }
.group-body { flex: 1; display: flex; align-items: flex-start; padding: 3px 8px 0; }
.g118 .group-body { padding-left: 11px; }
.g58 .group-body, .g69 .group-body { justify-content: center; }
.group-name { text-align: center; line-height: 12px; }
.big-btn { display: flex; flex-direction: column; align-items: center; flex-shrink: 0; width: 42px; }
.big-btn.mid { width: 44px; }
.big-btn.thin { width: 40px; }
.big-btn.thin3d { width: 44px; }
.big-btn.wide { width: 52px; }
.big-btn.wider { width: 54px; }
.big-label { margin-top: 1px; white-space: nowrap; }
.thin .big-label, .narrow .big-label { width: 12px; white-space: normal; }
.thin3d .big-label { width: 24px; white-space: normal; }
.big-btn .caret { margin: 5px 0 0 2px; }
.small-list { display: flex; flex-direction: column; gap: 7px; }
.small-list.roomy { gap: 15px; padding-top: 8px; }
.big-btn + .small-list { padding-left: 2px; margin-right: -8px; }
.small-btn { display: flex; align-items: center; gap: 3px; white-space: nowrap; }
.small-btn .caret { margin-left: 8px; }
.collapse-btn { margin: auto 8px 0 auto; padding-bottom: 2px; }

/* 文档区 */
.workspace { flex: 1; display: flex; min-height: 0; background: #e6e6e6; }
.canvas { flex: 1; display: flex; justify-content: center; overflow: hidden; padding: 26px 2px 0 0; }
.page {
  position: relative;
  width: 1190px;
  height: 1682px;
  flex-shrink: 0;
  box-sizing: border-box;
  padding: 107px 142px 0 143px;
  background: #fff;
  border: 1px solid #c6c6c6;
}
.margin-marks { display: flex; justify-content: space-between; }
.mark { width: 35px; height: 35px; border-bottom: 1px solid #ababab; }
.mark.left { border-right: 1px solid #ababab; }
.mark.right { border-left: 1px solid #ababab; }
.lines {
  display: flex;
  flex-direction: column;
  height: 686px;
  margin: -1px 36px 0;
  padding: 0;
  list-style: none;
  font-family: "Noto Sans CJK SC", sans-serif;
  font-size: 20px;
  font-weight: 300;
  color: #000;
}
.lines li { flex: 1; display: flex; align-items: center; }
.paste-btn {
  position: absolute; top: 359px; left: 215px;
  display: flex; align-items: center; gap: 3px;
  height: 23px; padding: 0 3px;
  background: #fdfdfd; border: 1px solid #ababab; color: #444;
}
.red-arrow { position: absolute; top: 359px; left: 291px; }

.scrollbar { display: flex; flex-direction: column; width: 16px; padding: 2px 0; background: #dadada; box-sizing: border-box; }
.scroll-btn {
  display: flex; align-items: center; justify-content: center;
  height: 15px; width: 15px; background: #fff; border: 1px solid #ababab; box-sizing: border-box;
}
.scroll-btn.end { margin-top: auto; }
.thumb { height: 137px; width: 15px; box-sizing: border-box; background: #fff; border: 1px solid #ababab; }

/* 状态栏 */
.status-bar {
  display: flex; align-items: center;
  height: 22px; box-sizing: border-box; padding: 0 9px 0 8px;
  background: #f3f3f3; border-top: 1px solid #c6c6c6; color: #444;
}
.status-bar > span { padding-bottom: 2px; }
.st-page { margin-right: 23px; }
.st-count { margin-right: 20px; }
.st-book { margin-right: 17px; }
.views { display: flex; align-self: stretch; margin-left: auto; }
.view-btn { display: flex; align-items: center; justify-content: center; width: 40px; }
.view-btn.active { background: #c8c8c8; }
.status-bar > .minus { width: 7px; height: 1px; margin: 0 5px; padding: 0; background: #444; }
.zoom-range { appearance: none; width: 102px; height: 14px; margin: 0 26px 0 0; background: linear-gradient(#aaa, #aaa) center / 100% 1px no-repeat; }
.zoom-range::-webkit-slider-thumb { appearance: none; width: 5px; height: 12px; background: #666; }

/* 任务栏 */
.taskbar { display: flex; height: 40px; background: #d8dae0; color: #111; }
.start-btn { display: flex; align-items: center; justify-content: center; width: 48px; }
.search-box {
  display: flex; align-items: center; gap: 11px;
  width: 344px; padding: 0 11px; box-sizing: border-box;
  background: #fff; border: 1px solid #c4c6ca;
}
.search-box input { flex: 1; min-width: 0; padding: 0; border: none; outline: none; font: inherit; font-size: 14px; color: #222; }
.search-box input::placeholder { color: #222; opacity: 1; }
.app-btn { position: relative; display: flex; align-items: center; justify-content: center; width: 49px; }
.app-btn.running::after { content: ""; position: absolute; left: 5px; right: 4px; bottom: 0; height: 2px; background: #0078d7; }
.app-btn.multi::after { background: linear-gradient(90deg, #0078d7 80%, #5ca5e5 80%); }
.app-btn.current { background: #eceef3; border-bottom: 2px solid #0078d7; padding-top: 2px; }

.tray { display: flex; align-items: center; margin-left: auto; padding-right: 4px; }
.battery {
  position: relative;
  width: 44px; height: 24px; margin: 0 3px 0 1px; box-sizing: border-box;
  border: 3px solid #fff; border-radius: 4px; outline: 1px solid #777; outline-offset: -1px;
  background: linear-gradient(90deg, #1c9e4b 54%, #969696 54%);
  color: #fff; text-align: center; line-height: 18px;
}
.battery::after {
  content: ""; position: absolute; top: -5px; right: -2px;
  width: 9px; height: 9px; border-radius: 50%; background: #f06464;
}
.tray-btn { display: flex; justify-content: center; width: 24px; }
.ime { width: 22px; text-align: center; font-size: 16px; }
.clock { display: flex; flex-direction: column; width: 72px; text-align: center; line-height: 19px; }
.notice-btn { display: flex; justify-content: center; align-items: center; width: 50px; height: 40px; padding-right: 8px; border-right: 1px solid #aaa; }

/* 悬浮层 */
.floating { position: absolute; right: 0; bottom: 0; pointer-events: none; }
.mark-shape {
  fill: #fff; stroke: #b4b4b4; stroke-width: 4px; stroke-linejoin: round; stroke-opacity: 0.6;
  paint-order: stroke; opacity: 0.75;
}
.mark-big { font: 700 76px "Liberation Sans", sans-serif; }
.mark-cn { font: 900 58px "Noto Sans CJK SC", sans-serif; }
.mark-url { font: 400 42px "Liberation Sans", sans-serif; }
.mark-du { font: 700 46px "Liberation Sans", sans-serif; fill: #e6e6e6; stroke: #c2c2c2; stroke-width: 2px; }
.lyric { font: 700 20px "Noto Sans CJK SC", sans-serif; stroke: #20454a; stroke-width: 1px; }
.speed-text text { fill: #fff; font-size: 9px; font-weight: 600; }
.ball-num { fill: #fff; font-size: 23px; }
.ball-pct { fill: #fff; font-size: 10px; }
</style>
